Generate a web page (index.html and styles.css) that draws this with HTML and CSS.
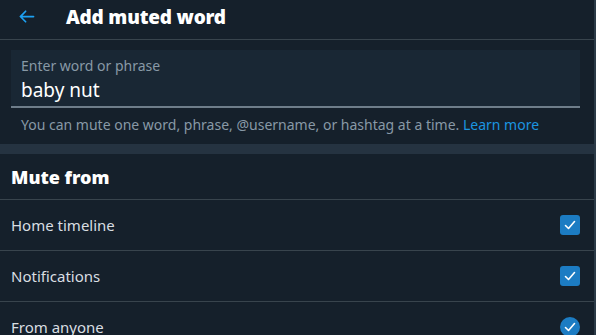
FILE: index.html
```html
<!DOCTYPE html>
<html lang="en">
  <head>
    <meta charset="UTF-8" />
    <meta name="viewport" content="width=device-width, initial-scale=1.0" />
    <title>Add muted word</title>
    <link rel="stylesheet" href="styles.css">
  </head>
  <body>
    <div class="page">
      <header class="top-bar">
        <span class="back-btn">
          <svg viewBox="0 0 24 24" width="21" height="21">
            <path d="M20 11H7.414l4.293-4.293a1 1 0 0 0-1.414-1.414l-6 6a1 1 0 0 0 0 1.414l6 6a1 1 0 0 0 1.414-1.414L7.414 13H20a1 1 0 1 0 0-2z" fill="#1da1f2" />
          </svg>
        </span>
        <h1>Add muted word</h1>
      </header>

      <div class="word-section">
        <div class="word-field">
          <label for="word">Enter word or phrase</label>
          <input type="text" id="word" value="baby nut" autocomplete="off" />
        </div>
        <p class="hint">
          You can mute one word, phrase, @username, or hashtag at a time.
          <a href="#">Learn more</a>
        </p>
      </div>

      <div class="band"></div>

      <h2 class="section-title">Mute from</h2>

      <div class="option-row">
        <span>Home timeline</span>
        <span class="check"><svg viewBox="0 0 20 20" width="20" height="20"><path d="M5.5 10.5l3 3 6-7" /></svg></span>
      </div>
      <div class="option-row">
        <span>Notifications</span>
        <span class="check"><svg viewBox="0 0 20 20" width="20" height="20"><path d="M5.5 10.5l3 3 6-7" /></svg></span>
      </div>
      <div class="option-row">
        <span>From anyone</span>
        <span class="check round"><svg viewBox="0 0 20 20" width="20" height="20"><path d="M5.5 10.5l3 3 6-7" /></svg></span>
      </div>
    </div>
  </body>
</html>
```

FILE: styles.css
```css
body {
  margin: 0;
  padding: 0;
  background-color: #15202b; /* latar gelap */
  font-family: "Noto Sans", "Open Sans", sans-serif;
  color: #ffffff;
  overflow: hidden;
}
.page {
  width: 594px;
  border-right: 2px solid #2b3a47;
  min-height: 100vh;
}
.top-bar {
  display: flex;
  align-items: center;
  border-bottom: 1px solid #38444d;
  padding-left: 16px;
  padding-bottom: 6px;
  box-sizing: border-box;
  height: 40px;
}
.back-btn {
  display: flex;
  width: 50px;
}
.top-bar h1 {
  margin: 0;
  font-size: 19px;
  font-weight: 900;
  letter-spacing: -0.2px;
}
.word-section {
  padding: 10px 14px 0 11px;
}
.word-field {
  background-color: #192734;
  border-bottom: 2px solid #6e7d8a;
  padding: 6px 10px 4px;
  height: 58px;
  box-sizing: border-box;
  display: flex;
  flex-direction: column;
}
.word-field label {
  font-size: 14px;
  color: #8899a6;
  line-height: 19px;
}
.word-field input {
  background: transparent;
  border: none;
  outline: none;
  color: #ffffff;
  font-family: inherit;
  font-size: 19px;
  padding: 0;
  margin-top: 3px;
  line-height: 24px;
}
.hint {
  margin: 0;
  padding: 8px 0 10px 10px;
  font-size: 14px;
  line-height: 18px;
  color: #8899a6;
}
.hint a {
  color: #1b95e0;
  text-decoration: none;
}
.band {
  height: 10px;
  background-color: #253341;
}
.section-title {
  margin: 0;
  padding: 0 11px;
  height: 45px;
  display: flex;
  align-items: center;
  font-size: 18px;
  font-weight: 900;
  border-bottom: 1px solid #38444d;
}
.option-row {
  display: flex;
  justify-content: space-between;
  align-items: center;
  height: 50px;
  padding: 0 14px 0 11px;
  border-bottom: 1px solid #38444d;
  font-size: 15px;
  color: #d9dee2;
}
.check {
  width: 20px;
  height: 20px;
  border-radius: 3px;
  background-color: #1c7cc3;
  display: flex;
}
.check.round {
  border-radius: 50%;
}
.check path {
  fill: none;
  stroke: #ffffff;
  stroke-width: 1.6;
  stroke-linecap: round;
  stroke-linejoin: round;
}
```
